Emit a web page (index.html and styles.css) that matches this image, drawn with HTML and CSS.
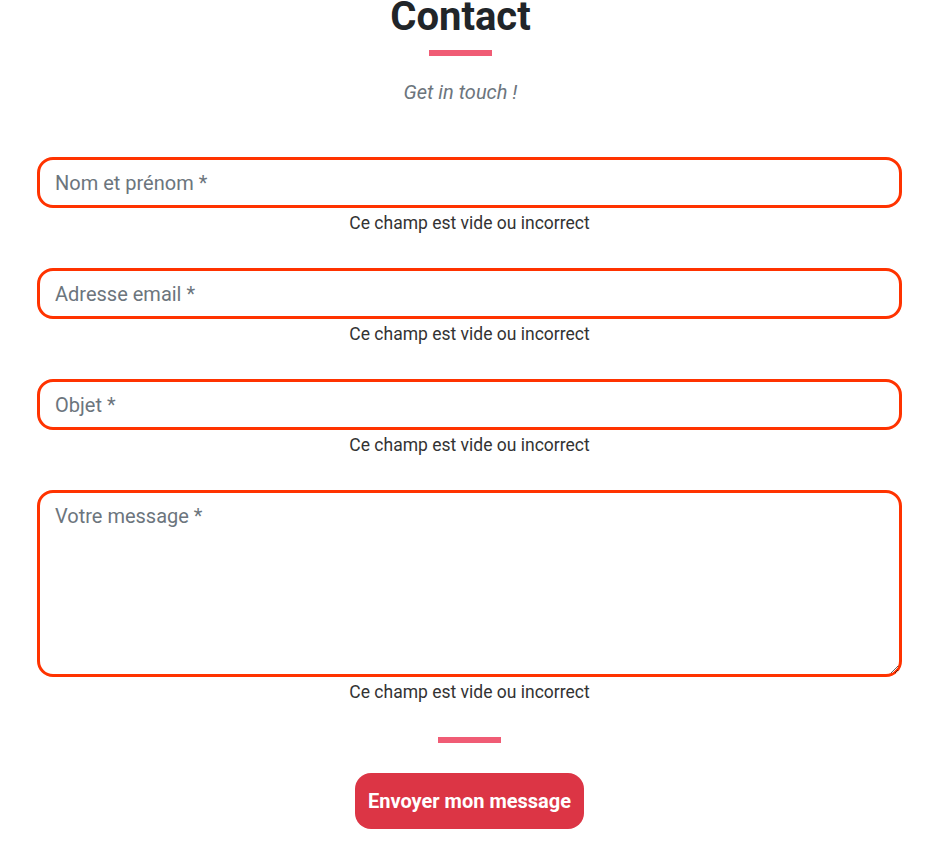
FILE: index.html
```html
<!DOCTYPE html>
<html lang="fr">
<head>
<meta charset="utf-8">
<title>Contact</title>
<link rel="stylesheet" href="styles.css">
</head>
<body>
<section class="contact">
  <header class="contact-head">
    <h1 class="contact-title">Contact</h1>
    <div class="accent-bar"></div>
    <p class="contact-sub">Get in touch !</p>
  </header>
  <form class="contact-form" novalidate>
    <div class="field">
      <input class="input is-invalid" type="text" placeholder="Nom et prénom *">
      <div class="error">Ce champ est vide ou incorrect</div>
    </div>
    <div class="field">
      <input class="input is-invalid" type="email" placeholder="Adresse email *">
      <div class="error">Ce champ est vide ou incorrect</div>
    </div>
    <div class="field">
      <input class="input is-invalid" type="text" placeholder="Objet *">
      <div class="error">Ce champ est vide ou incorrect</div>
    </div>
    <div class="field">
      <textarea class="input textarea is-invalid" placeholder="Votre message *"></textarea>
      <div class="error">Ce champ est vide ou incorrect</div>
    </div>
    <div class="form-foot">
      <div class="accent-bar"></div>
      <button class="send-btn" type="button">Envoyer mon message</button>
    </div>
  </form>
</section>
</body>
</html>
```

FILE: styles.css
```css
* { box-sizing: border-box; }
html, body { margin: 0; padding: 0; background: #fff; }
body {
  font-family: Roboto, "Liberation Sans", sans-serif;
  color: #333;
  overflow: hidden;
}
.contact {
  width: 947px;
  padding: 0 45px 0 37px;
}
.contact-head {
  display: flex;
  flex-direction: column;
  align-items: center;
  padding-right: 18px;
}
.contact-title {
  margin: -7px 0 0;
  font-size: 40px;
  line-height: 48px;
  font-weight: 700;
  color: #212529;
}
.accent-bar {
  width: 63px;
  height: 6px;
  background: #f05c75;
}
.contact-head .accent-bar { margin-top: 9px; }
.contact-sub {
  margin: 21px 0 0;
  font-size: 20px;
  line-height: 30px;
  font-style: italic;
  color: #6c757d;
}
.contact-form {
  margin-top: 50px;
  display: flex;
  flex-direction: column;
  gap: 33px;
}
.field { display: flex; flex-direction: column; }
.input {
  display: block;
  width: 865px;
  height: 51px;
  padding: 0 15px;
  border: 3px solid #ff3300;
  border-radius: 16px;
  font-family: Roboto, "Liberation Sans", sans-serif;
  font-size: 20px;
  color: #212529;
  background: #fff;
  outline: none;
}
.input::placeholder { color: #6c757d; opacity: 1; }
.textarea {
  height: 187px;
  padding: 8px 15px;
  line-height: 30px;
  resize: vertical;
}
.error {
  padding-top: 3px;
  text-align: center;
  font-size: 17.5px;
  line-height: 24px;
  color: #333;
}
.form-foot {
  display: flex;
  flex-direction: column;
  align-items: center;
  gap: 30px;
}
.send-btn {
  height: 56px;
  padding: 0 13px;
  border: 0;
  border-radius: 16px;
  background: #dc3545;
  color: #fff;
  font-family: Roboto, "Liberation Sans", sans-serif;
  font-size: 20px;
  font-weight: 700;
  cursor: pointer;
}
```
